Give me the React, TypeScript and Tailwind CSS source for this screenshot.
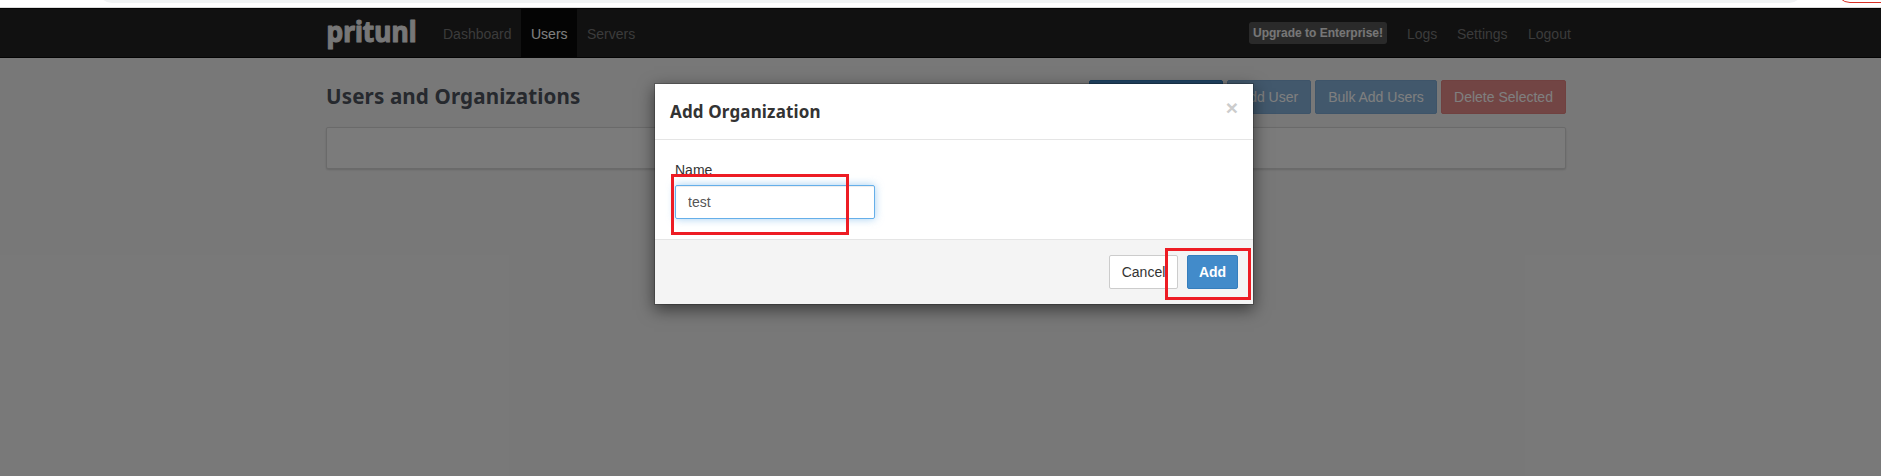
import clsx from "clsx";

const leftLinks = [
  { label: "Dashboard", active: false, width: "w-[88px]" },
  { label: "Users", active: true, width: "w-14" },
  { label: "Servers", active: false, width: "w-[68px]" },
];

const rightLinks = [
  { label: "Logs", width: "w-[50px]" },
  { label: "Settings", width: "w-[71px]" },
  { label: "Logout", width: "w-[62px]" },
];

const actions = [
  { label: "Add Organization", style: "w-[134px] bg-[#428bca] border-[#357ebd]" },
  { label: "Add User", style: "w-[84px] bg-[#84b0d8] border-[#7ca9d2]" },
  { label: "Bulk Add Users", style: "w-[122px] bg-[#84b0d8] border-[#7ca9d2]" },
  { label: "Delete Selected", style: "w-[125px] bg-[#e48a88] border-[#e18380]" },
];

export default function App() {
  return (
    <div className="relative flex h-[476px] w-[1881px] flex-col overflow-hidden bg-white font-['Liberation_Sans',Arial,sans-serif] text-sm leading-5 text-[#333]">
      <BrowserEdge />
      <div className="relative grow bg-[#f1f1f1]">
        <Navbar />
        <main className="ml-[326px] w-[1240px] pt-[22px]">
          <div className="flex h-[34px] items-center justify-between">
            <h1 className="whitespace-nowrap pb-0.5 font-['Noto_Sans',sans-serif] text-[20.6px] font-bold tracking-[0.13px] text-[#4c525c]">
              Users and Organizations
            </h1>
            <div className="flex gap-1">
              {actions.map((a) => (
                <button
                  key={a.label}
                  className={clsx("h-[34px] whitespace-nowrap rounded-[2px] border text-white", a.style)}
                >
                  {a.label}
                </button>
              ))}
            </div>
          </div>
          <section className="mt-[13px] h-[42px] rounded-[2px] border border-[#d4d4d4] bg-[#f7f7f7] shadow-[0_1px_2px_rgba(0,0,0,0.15)]" />
        </main>
        <div className="absolute inset-0 bg-black/50" />
        <Modal />
      </div>
      <div className="absolute left-[671px] top-[174px] h-[61px] w-[178px] border-3 border-[#ed1c24]" />
      <div className="absolute left-[1165px] top-[248px] h-[52px] w-[86px] border-3 border-[#ed1c24]" />
    </div>
  );
}

function BrowserEdge() {
  return (
    <div className="relative h-2 shrink-0 overflow-hidden border-b border-[#dcdcdc]">
      <div className="absolute -top-[25px] left-[98px] h-7 w-[1705px] rounded-full bg-[#f1f3f4]" />
      <div className="absolute -top-[25px] left-[1836px] h-7 w-20 rounded-full border border-[#d93025]" />
    </div>
  );
}

function Navbar() {
  return (
    <nav className="h-[50px] border-y border-[#080808] bg-[#222]">
      <div className="ml-[326px] flex h-full w-[1254px] text-[#777]">
        <a className="w-[107px]">
          <svg className="h-12 w-24" viewBox="0 0 96 48">
            <text
              x="0.5"
              y="33"
              className="fill-[#eee] stroke-[#eee] font-['Noto_Sans',sans-serif] text-[28px] font-bold"
              strokeWidth="1.1"
              strokeLinejoin="round"
              textLength="90"
              lengthAdjust="spacingAndGlyphs"
            >
              pritunl
            </text>
          </svg>
        </a>
        {leftLinks.map((l) => (
          <a
            key={l.label}
            className={clsx("pl-2.5 pt-[15px]", l.width, l.active && "bg-[#080808] text-white")}
          >
            {l.label}
          </a>
        ))}
        <div className="ml-auto flex">
          <a className="mr-2.5 mt-[13px] h-[22px] w-[138px] whitespace-nowrap rounded-[3px] bg-[#555] text-center text-xs font-bold leading-[22px] text-white/90">
            Upgrade to Enterprise!
          </a>
          {rightLinks.map((l) => (
            <a key={l.label} className={clsx("pl-2.5 pt-[15px]", l.width)}>
              {l.label}
            </a>
          ))}
        </div>
      </div>
    </nav>
  );
}

function Modal() {
  return (
    <div className="absolute left-[654px] top-[75px] w-[600px] border border-black/20 bg-white bg-clip-padding shadow-[0_5px_15px_rgba(0,0,0,0.5)]">
      <header className="flex h-14 items-start justify-between border-b border-[#e5e5e5] px-[15px]">
        <h4 className="pt-[18px] font-['Noto_Sans',sans-serif] text-[17px] font-bold tracking-[0.15px] text-[#333]">
          Add Organization
        </h4>
        <button className="pt-[14px] text-[21px] font-bold leading-5 text-[#ccc]">×</button>
      </header>
      <div className="h-[99px] px-5 pt-5">
        <label className="block">Name</label>
        <input
          readOnly
          value="test"
          className="mt-[5px] h-[34px] w-[200px] rounded-[2px] border border-[#66afe9] px-3 text-[#555] shadow-[inset_0_1px_1px_rgba(0,0,0,0.075),0_0_8px_rgba(102,175,233,0.6)] outline-none"
        />
      </div>
      <footer className="flex h-[65px] justify-end gap-[9px] border-t border-[#e5e5e5] bg-[#f4f4f4] px-[15px] pt-[15px]">
        <button className="h-[34px] w-[69px] rounded-[2px] border border-[#ccc] bg-white">Cancel</button>
        <button className="h-[34px] w-[51px] rounded-[2px] border border-[#357ebd] bg-[#428bca] font-bold text-white">
          Add
        </button>
      </footer>
    </div>
  );
}
